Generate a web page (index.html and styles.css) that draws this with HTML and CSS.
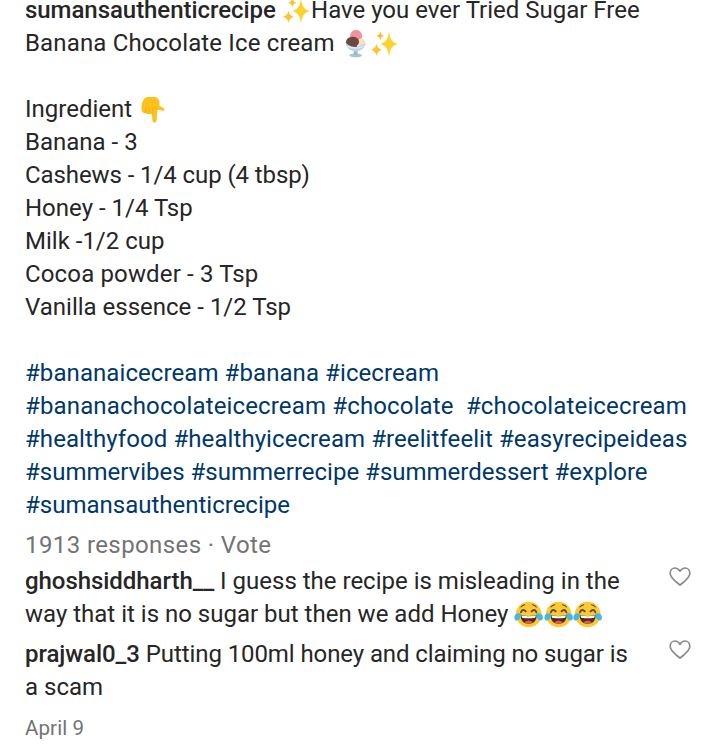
FILE: index.html
```
<!DOCTYPE html>
<html lang="en">

<head>
    <meta charset="UTF-8">
    <meta name="viewport" content="width=device-width, initial-scale=1.0">
    <title>Post</title>
    <link rel="stylesheet" href="styles.css">
</head>

<body>

    <!-- Shared icons -->
    <svg class="icon-defs" aria-hidden="true">
        <symbol id="sparkles" viewBox="0 0 30 30">
            <path fill="#fdd22f" d="M19.500 2 C20.500 10 22 13.500 28.500 15.500 C22 17.500 20.500 21 19.500 29 C18.500 21 17 17.500 10.500 15.500 C17 13.500 18.500 10 19.500 2Z" />
            <path fill="#fdbf2d" d="M10.500 2 Q11 6 14.500 7 Q11 8 10.500 12 Q10 8 6.500 7 Q10 6 10.500 2Z" />
            <path fill="#fdc52d" d="M6.500 15 Q7.300 20 12 21.500 Q7.300 23 6.500 28 Q5.700 23 1 21.500 Q5.700 20 6.500 15Z" />
        </symbol>
        <symbol id="sundae" viewBox="0 0 30 30">
            <ellipse cx="15" cy="27.300" rx="6.500" ry="1.900" fill="#a9c5cf" />
            <path fill="#9ab9c5" d="M13.500 19h3l.7 8h-4.400z" />
            <circle cx="15.500" cy="7.200" r="6.300" fill="#f3929f" />
            <path fill="#f7e1b5" d="M16 14q2-5 6-4 4 2 2.500 7H16z" />
            <path fill="#704640" d="M5 16q-1-7.500 6.500-8 6.500 0 7 5 0 4.500-6 5z" />
            <path fill="#bad5df" d="M4.500 13.500q2 4 10.500 4t10.500-4q-.5 8-8.500 9.500h-4q-8-1.500-8.500-9.500z" />
            <path fill="#704640" d="M6.500 13q5-3 10.500 1l-1 4.500q-6 .5-9-2.500z" />
            <path fill="none" stroke="#e2edf1" stroke-width="1.200" d="M6.500 18q8.500 3.500 17-.2" />
        </symbol>
        <symbol id="point-down" viewBox="0 0 30 30">
            <path fill="#fcc21b" d="M3.500 12Q4.500 3 9 2h8.500q4.500 1 4.500 6v3l5 3q1 2-1.500 2.400L20 15l-1 12q-.8 2-2.500 1.500-1.600-.5-1.800-2.500l-.5-7q-1.500 1.700-3.200.5-2 .7-3.500-.8-3.500 0-4-3.200z" />
            <path fill="none" stroke="#efa51b" stroke-width=".7" stroke-linecap="round" d="M7.500 17.500q-.2-2.500 1-4.500M11 18.500q-.2-2.500 1-4.500M14.500 19q-.2-4 1.500-6M20 15q0-2-2-3" />
        </symbol>
        <symbol id="joy" viewBox="0 0 30 30">
            <circle cx="15" cy="15" r="13.300" fill="#fcc932" />
            <path fill="none" stroke="#66461f" stroke-width="1.900" stroke-linecap="round" stroke-linejoin="round" d="M7 12.500Q9 8.500 12 11.800M18 11.800Q21 8.500 23 12.500" />
            <path fill="none" stroke="#66461f" stroke-width="1.100" stroke-linecap="round" d="M7 7.200q1.500-2 4-2.300M19 4.900q2.500.3 4 2.300" />
            <path fill="#4e2b23" d="M6.500 15.500q8.500 2 17 0-.5 9-8.500 9t-8.500-9z" />
            <path fill="#fff" d="M7.500 16q7.500 1.600 15 0l-.7 2.300q-6.800 1.200-13.600 0z" />
            <path fill="#ef5350" d="M10.500 23q4.500-3.400 9 0-4.500 3-9 0z" />
            <path fill="#45b6e8" d="M7.500 14q-7-1-7.300 4 .2 3.500 3.200 3.200Q6.500 20.500 7.500 14zM22.500 14q7-1 7.300 4-.2 3.500-3.200 3.200-3.100-.7-4.100-7.200z" />
        </symbol>
        <symbol id="heart" viewBox="0 0 24 22">
            <path fill="none" stroke="#8c8c8c" stroke-width="1.700" stroke-linejoin="round" d="M12 5.200C10.500 2.800 8.700 2 7 2 4.200 2 2.200 4.300 2.200 7.200c0 3.300 2.200 5.300 4.800 7.600 2 1.700 3.500 3.200 5 4.400 1.500-1.200 3-2.700 5-4.400 2.600-2.300 4.800-4.300 4.800-7.600C21.800 4.300 19.800 2 17 2c-1.700 0-3.500.8-5 3.200z" />
        </symbol>
    </svg>

    <div class="post">
        <div class="caption">
            <p><b>sumansauthenticrecipe</b> <svg class="emoji"><use href="#sparkles" /></svg>Have you ever Tried Sugar Free</p>
            <p class="wide">Banana Chocolate Ice cream <svg class="emoji"><use href="#sundae" /></svg><svg class="emoji"><use href="#sparkles" /></svg></p>
            <br>
            <p>Ingredient <svg class="emoji"><use href="#point-down" /></svg></p>
            <p>Banana - 3</p>
            <p class="tight">Cashews - 1/4 cup (4 tbsp)</p>
            <p>Honey - 1/4 Tsp</p>
            <p>Milk -1/2 cup</p>
            <p class="wide">Cocoa powder - 3 Tsp</p>
            <p>Vanilla essence - 1/2 Tsp</p>
            <br>
            <div class="hashtags">
                <p class="loose">#bananaicecream #banana #icecream</p>
                <p class="wide">#bananachocolateicecream #chocolate&nbsp; #chocolateicecream</p>
                <p class="loose">#healthyfood #healthyicecream #reelitfeelit #easyrecipeideas</p>
                <p>#summervibes #summerrecipe #summerdessert #explore</p>
                <p>#sumansauthenticrecipe</p>
            </div>
        </div>

        <p class="responses">1913 responses · Vote</p>

        <div class="comment">
            <div class="comment-text">
                <p><b>ghoshsiddharth__</b> I guess the recipe is misleading in the</p>
                <p>way that it is no sugar but then we add Honey <svg class="emoji"><use href="#joy" /></svg><svg class="emoji"><use href="#joy" /></svg><svg class="emoji"><use href="#joy" /></svg></p>
            </div>
            <svg class="like"><use href="#heart" /></svg>
        </div>

        <div class="comment">
            <div class="comment-text">
                <p class="tight"><b>prajwal0_3</b> Putting 100ml honey and claiming no sugar is</p>
                <p>a scam</p>
            </div>
            <svg class="like"><use href="#heart" /></svg>
        </div>

        <p class="date">April 9</p>
    </div>

</body>

</html>
```
FILE: styles.css
```
body {
    margin: 0;
    background-color: #fff;
    font-family: Roboto, "Liberation Sans", sans-serif;
    font-size: 24px;
    line-height: 33px;
    color: #262626;
    overflow: hidden;
}

p {
    margin: 0;
    white-space: nowrap;
}

b {
    font-weight: 500;
    letter-spacing: -0.050px;
}

/* Letter spacing tweaks */
.tight {
    letter-spacing: -0.090px;
}

.loose {
    letter-spacing: 0.080px;
}

.wide {
    letter-spacing: 0.150px;
}

.icon-defs {
    display: none;
}

.post {
    margin-top: -6px;
    padding: 0 25px;
}

.hashtags {
    color: #00376b;
}

.emoji {
    display: inline-block;
    width: 29.300px;
    height: 29px;
    vertical-align: -5px;
    margin: -4px 0;
    position: relative;
    top: -2px;
}

.responses {
    margin-top: 7px;
    color: #737373;
    letter-spacing: 0.4px;
}

.comment {
    display: flex;
    justify-content: space-between;
    margin-top: 3px;
}

.comment + .comment {
    margin-top: 7px;
}

.like {
    width: 24px;
    height: 22px;
    margin: 1px 3px 0 0;
}

.date {
    margin-top: 8px;
    font-size: 20.5px;
    letter-spacing: 0.1px;
    color: #737373;
}
```
